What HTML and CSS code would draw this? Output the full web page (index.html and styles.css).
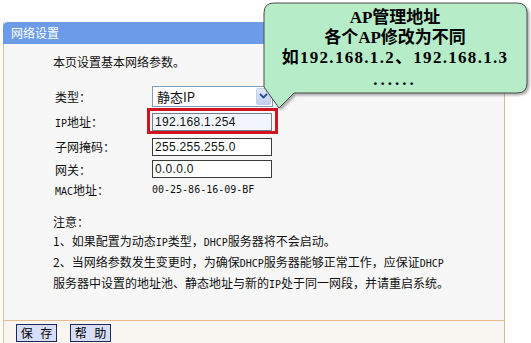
FILE: index.html
```html
<!DOCTYPE html>
<html lang="zh-CN">
<head>
  <meta charset="UTF-8" />
  <title>网络设置</title>
  <link rel="stylesheet" href="styles.css">
</head>
<body>
  <div class="panel">
    <div class="panel-title">网络设置</div>
    <div class="panel-body">
      <p class="intro">本页设置基本网络参数。</p>
      <div class="form-grid">
        <span class="label">类型：</span>
        <div class="field">
          <div class="select">
            <span class="select-text">静态IP</span>
            <span class="select-btn">
              <svg width="9" height="6" viewBox="0 0 9 6"><polyline points="1,1 4.5,4.5 8,1" fill="none" stroke="#2a4a9a" stroke-width="1.8"/></svg>
            </span>
          </div>
        </div>

        <span class="label"><span class="en">IP</span>地址：</span>
        <div class="field">
          <div class="highlight">
            <input class="text-input focused" type="text" value="192.168.1.254" />
          </div>
        </div>

        <span class="label">子网掩码：</span>
        <div class="field">
          <input class="text-input" type="text" value="255.255.255.0" />
        </div>

        <span class="label">网关：</span>
        <div class="field">
          <input class="text-input" type="text" value="0.0.0.0" />
        </div>

        <span class="label"><span class="en">MAC</span>地址：</span>
        <div class="field">
          <span class="mac">00-25-86-16-09-BF</span>
        </div>
      </div>

      <div class="notes">
        <p>注意：</p>
        <p>1、如果配置为动态<span class="en">IP</span>类型，<span class="en">DHCP</span>服务器将不会启动。</p>
        <p>2、当网络参数发生变更时，为确保<span class="en">DHCP</span>服务器能够正常工作，应保证<span class="en">DHCP</span></p>
        <p>服务器中设置的地址池、静态地址与新的<span class="en">IP</span>处于同一网段，并请重启系统。</p>
      </div>
    </div>
    <div class="panel-foot">
      <button class="btn">保 存</button>
      <button class="btn">帮 助</button>
    </div>
  </div>

  <div class="callout">
    <svg class="callout-shape" width="270" height="112" viewBox="262 0 270 112">
      <path d="M274 3 H517 Q527 3 527 13 V83 Q527 93 517 93 H294 L279 108 L264 87 V13 Q264 3 274 3 Z"
            fill="#b7ecc9" stroke="#4a4a4a" stroke-width="1"/>
    </svg>
    <div class="callout-text">
      <p>AP管理地址</p>
      <p>各个AP修改为不同</p>
      <p class="wide">如192.168.1.2、192.168.1.3</p>
      <p class="dots">......</p>
    </div>
  </div>
</body>
</html>
```

FILE: styles.css
```css
body {
  margin: 0;
  padding: 0;
  background: #fff;
  font-family: "Noto Sans CJK SC", sans-serif;
  font-size: 12px;
  color: #111;
}
p {
  margin: 0;
}
.en {
  font-family: "DejaVu Sans Mono", monospace;
  font-size: 10px;
}
.panel {
  width: 500px;
  margin: 22px 0 0 3px;
  border-left: 1px solid #dcc19c;
  border-right: 1px solid #d4b896;
  border-bottom: 1px solid #cfc2b4;
  background: #f7f7f7;
}
.panel-title {
  height: 22px;
  line-height: 22px;
  margin-left: -1px;
  margin-right: -1px;
  padding-left: 8px;
  background: #6c9ce9;
  color: #fff;
  border-top-left-radius: 5px;
}
.panel-body {
  padding: 9px 0 26px 49px;
}
.intro {
  line-height: 18px;
}
.form-grid {
  display: grid;
  grid-template-columns: 93px 140px;
  grid-template-rows: 22px 28px 23px 22px 18px;
  align-items: center;
  margin: 14px 0 0 2px;
}
.field {
  display: flex;
  align-items: center;
}
.select {
  display: flex;
  align-items: center;
  justify-content: space-between;
  box-sizing: border-box;
  width: 121px;
  height: 21px;
  margin-left: 4px;
  padding: 0 1px 0 4px;
  background: #fff;
  border: 1px solid #7f9db9;
  font-size: 13px;
}
.select-btn {
  display: flex;
  align-items: center;
  justify-content: center;
  width: 15px;
  height: 17px;
  background: linear-gradient(#e1e8f8, #c3d0ee);
  border: 1px solid #c2cfee;
  border-radius: 2px;
  box-sizing: border-box;
}
.highlight {
  padding: 1px 3px 0 2px;
  border: 3px solid #d2121d;
  margin-left: -1px;
}
.text-input {
  box-sizing: border-box;
  width: 120px;
  height: 18px;
  margin: 0 0 0 4px;
  padding: 0 2px;
  border: 1px solid #3c3c3c;
  background: #fff;
  font-family: "Liberation Sans", sans-serif;
  font-size: 12px;
  letter-spacing: 0.3px;
  color: #111;
}
.highlight .text-input {
  margin-left: 0;
  background: #f2f5fb;
  border-color: #6f7f99;
}
.mac {
  margin-left: 4px;
  font-family: "DejaVu Sans Mono", monospace;
  font-size: 10px;
}
.notes {
  margin-top: 14px;
  line-height: 19px;
}
.panel-foot {
  display: flex;
  gap: 13px;
  height: 25px;
  padding: 3px 0 0 12px;
  box-sizing: border-box;
  border-top: 1px solid #e6bb8c;
  background: #f9f6f2;
}
.btn {
  width: 41px;
  height: 18px;
  padding: 0;
  border: 1px solid #1b2a58;
  background: #d7dcf7;
  font-family: "Noto Sans CJK SC", sans-serif;
  font-size: 12px;
  line-height: 16px;
  word-spacing: 5px;
  white-space: nowrap;
  text-align: center;
  color: #000;
}
.callout {
  position: absolute;
  left: 262px;
  top: 0;
  width: 270px;
  height: 112px;
}
.callout-shape {
  position: absolute;
  left: 0;
  top: 0;
  filter: drop-shadow(2px 2px 1px rgba(0, 0, 0, 0.3));
}
.callout-text {
  position: relative;
  width: 266px;
  padding-top: 8px;
  text-align: center;
  font-family: "Liberation Serif", "Noto Sans CJK SC", serif;
  font-weight: bold;
  font-size: 17px;
  line-height: 20px;
  color: #000;
}
.callout-text .wide {
  letter-spacing: 1.3px;
}
.callout-text .dots {
  margin-top: 2px;
  letter-spacing: 3px;
}
```
